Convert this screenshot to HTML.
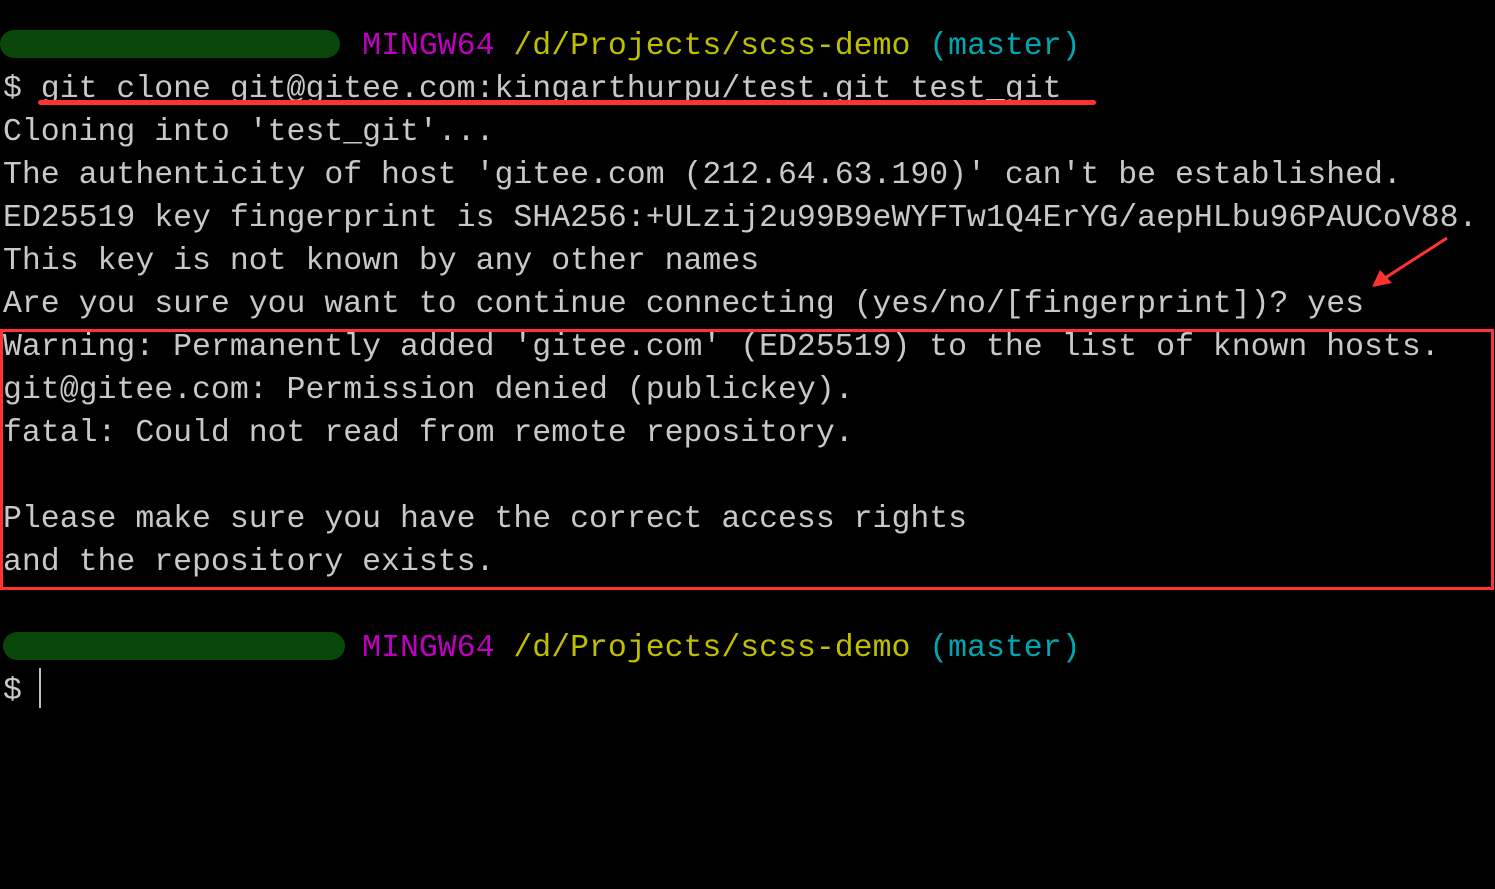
<!DOCTYPE html>
<html><head><style>
body{margin:0;background:#000;width:1495px;height:889px;overflow:hidden;position:relative}
pre{margin:0;position:absolute;left:3px;top:25px;font-family:"Liberation Mono",monospace;font-size:31.5px;line-height:43px;color:#c8c8c8}
.g{color:#0a8a0a}.m{color:#bf00bf}.y{color:#bfbf00}.c{color:#00a6b2}
.blur{position:absolute;background:#0a4a0a;border-radius:14px;opacity:.95}
</style></head><body>
<pre><span class="g">                  </span> <span class="m">MINGW64</span> <span class="y">/d/Projects/scss-demo</span> <span class="c">(master)</span>
$ git clone git@gitee.com:kingarthurpu/test.git test_git
Cloning into 'test_git'...
The authenticity of host 'gitee.com (212.64.63.190)' can't be established.
ED25519 key fingerprint is SHA256:+ULzij2u99B9eWYFTw1Q4ErYG/aepHLbu96PAUCoV88.
This key is not known by any other names
Are you sure you want to continue connecting (yes/no/[fingerprint])? yes
Warning: Permanently added 'gitee.com' (ED25519) to the list of known hosts.
git@gitee.com: Permission denied (publickey).
fatal: Could not read from remote repository.

Please make sure you have the correct access rights
and the repository exists.

<span class="g">                  </span> <span class="m">MINGW64</span> <span class="y">/d/Projects/scss-demo</span> <span class="c">(master)</span>
$ </pre>
<div class="blur" style="left:0;top:30px;width:340px;height:28px"></div>
<div class="blur" style="left:3px;top:632px;width:342px;height:28px"></div>
<div style="position:absolute;left:38px;top:100px;width:1058px;height:5px;background:#f33;border-radius:3px"></div>
<div style="position:absolute;left:0;top:329px;width:1488px;height:255px;border:3px solid #f33"></div>
<div style="position:absolute;left:39px;top:668px;width:2px;height:40px;background:#c0c0c0"></div>
<svg style="position:absolute;left:0;top:0" width="1495" height="889"><line x1="1447" y1="238" x2="1385" y2="278" stroke="#f33" stroke-width="3"/><polygon points="1372,287 1380,270 1392,283" fill="#f33"/></svg>
</body></html>
